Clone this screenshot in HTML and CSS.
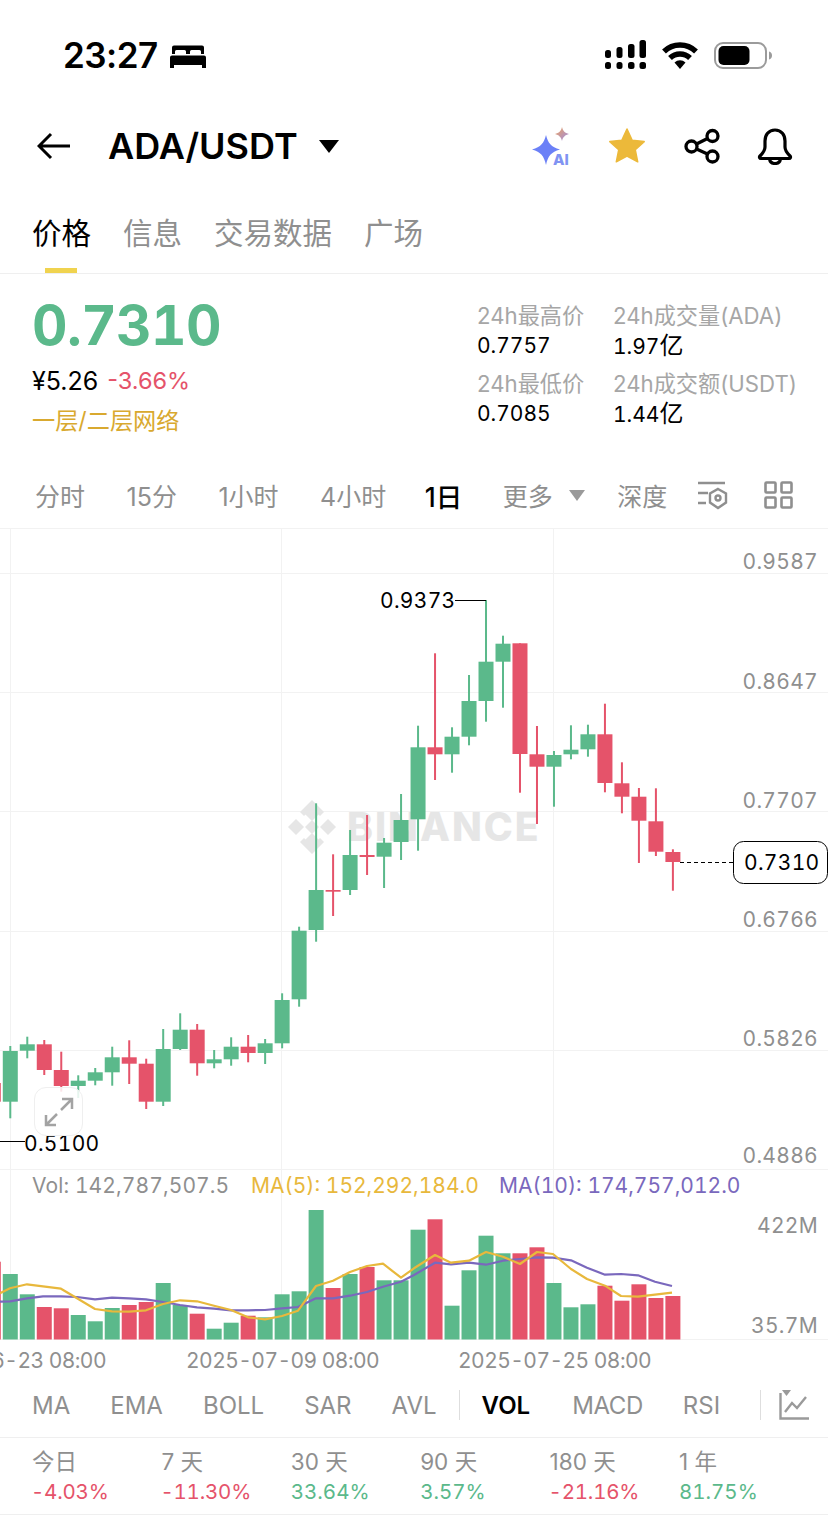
FILE: index.html
```html
<!DOCTYPE html>
<html lang="zh-CN">
<head>
  <meta charset="UTF-8">
  <meta name="viewport" content="width=device-width, initial-scale=1.0">
  <title>ADA/USDT</title>
  <link rel="stylesheet" href="styles.css">
</head>
<body>
  <div class="status-bar">
    <span class="clock">23:27</span>
    <svg class="bed" width="36" height="24" viewBox="0 0 36 24">
      <path d="M4 1.5h28a2 2 0 0 1 2 2V10h-3V7.500a1.500 1.500 0 0 0-1.500-1.500h-8A1.500 1.500 0 0 0 20 7.500V10h-4V7.500A1.500 1.500 0 0 0 14.500 6h-8A1.500 1.500 0 0 0 5 7.500V10H2V3.500a2 2 0 0 1 2-2z"/>
      <path d="M2 11.500h32a2 2 0 0 1 2 2V24h-4v-3H4v3H0V13.500a2 2 0 0 1 2-2z"/>
    </svg>
    <div class="status-icons">
      <svg width="42" height="30" viewBox="0 0 42 30">
        <rect x="0" y="10" width="6" height="8" rx="2.500"/><rect x="11.500" y="7" width="6" height="11" rx="2.500"/>
        <rect x="23" y="4" width="6.500" height="14" rx="2.500"/><rect x="34.500" y="0" width="6.500" height="18" rx="2.500"/>
        <rect x="0" y="22" width="6" height="7" rx="2.500"/><rect x="11.500" y="22" width="6" height="7" rx="2.500"/>
        <rect x="23" y="22" width="6.500" height="7" rx="2.500"/><rect x="34.500" y="22" width="6.500" height="7" rx="2.500"/>
      </svg>
      <svg class="wifi" width="36" height="27" viewBox="0 0 36 27">
        <path d="M2 9.500a23 23 0 0 1 32 0M8 16a14.500 14.500 0 0 1 20 0" fill="none" stroke="#000" stroke-width="5.500"/>
        <path d="M12.500 20.500a8 8 0 0 1 11 0L18 27z"/>
      </svg>
      <svg class="battery" width="58" height="27" viewBox="0 0 58 27">
        <rect x="1" y="1" width="51" height="25" rx="8" fill="none" stroke="#9b9b9b" stroke-width="2"/>
        <rect x="4.500" y="4" width="31" height="19" rx="5"/>
        <path d="M55 9.500c2 .5 3 2 3 4s-1 3.500-3 4z" fill="#9b9b9b"/>
      </svg>
    </div>
  </div>

  <div class="top-bar">
    <svg class="back" width="34" height="28" viewBox="0 0 34 28">
      <path d="M33 14H2M14 2L2 14l12 12" fill="none" stroke="#000" stroke-width="3"/>
    </svg>
    <span class="pair">ADA/USDT</span>
    <svg class="pair-caret" width="20" height="13" viewBox="0 0 20 13"><path d="M0 0h20L10 13z"/></svg>
    <div class="top-actions">
      <svg width="40" height="46" viewBox="0 -4 40 46">
        <defs>
          <linearGradient id="sparkleFill" x1="0" y1="0" x2="1" y2="1">
            <stop offset="0" stop-color="#f0a45c"/>
            <stop offset="1" stop-color="#9a8ce8"/>
          </linearGradient>
        </defs>
        <path d="M14 8c2 8 5 12 14 14.500C19 25 16 29 14 38 12 29 9 25 0 22.500 9 20 12 16 14 8z" fill="#6b80f7"/>
        <path d="M30 0c1 4 3 6 7 7-4 1-6 3-7 7-1-4-3-6-7-7 4-1 6-3 7-7z" fill="url(#sparkleFill)"/>
        <text x="21" y="38" class="ai-mark">AI</text>
      </svg>
      <svg width="36" height="36" viewBox="0 0 36 36">
        <path d="M18 1l5.200 11.200 12 1.400-8.900 8.200 2.400 12L18 28l-10.700 5.800 2.400-12L.8 13.600l12-1.400z" fill="#ecb93a" stroke="#ecb93a" stroke-width="1.500" stroke-linejoin="round"/>
      </svg>
      <svg class="share" width="36" height="36" viewBox="0 0 36 36" fill="none" stroke="#000" stroke-width="3.300">
        <circle cx="7.500" cy="18.500" r="5.500"/><circle cx="28.500" cy="8" r="5.500"/><circle cx="28.500" cy="28.500" r="5.500"/>
        <path d="M12.500 16l11-5.500M12.500 21l11 5"/>
      </svg>
      <svg width="36" height="37" viewBox="0 0 36 37" fill="none" stroke="#000" stroke-width="3.200" stroke-linejoin="round">
        <path d="M18 2c-6.500 0-10 5-10 11v6c0 4-2 6-5 9-1 1-.5 2.500 1 2.500h28c1.500 0 2-1.500 1-2.500-3-3-5-5-5-9v-6c0-6-3.500-11-10-11z"/>
        <path d="M12.500 31c.5 3 2.500 4.500 5.500 4.500s5-1.500 5.500-4.500"/>
      </svg>
    </div>
  </div>

  <div class="tabs">
    <span class="tab active">价格</span>
    <span class="tab">信息</span>
    <span class="tab">交易数据</span>
    <span class="tab">广场</span>
  </div>

  <div class="summary">
    <div class="price-block">
      <div class="last-price">0.7310</div>
      <div class="price-sub"><span class="cny">¥5.26</span><span class="down">-3.66%</span></div>
      <div class="network-tag">一层/二层网络</div>
    </div>
    <div class="stats">
      <div class="stat"><span class="stat-label">24h最高价</span><span class="stat-value">0.7757</span></div>
      <div class="stat"><span class="stat-label">24h成交量(ADA)</span><span class="stat-value">1.97<span class="unit">亿</span></span></div>
      <div class="stat"><span class="stat-label">24h最低价</span><span class="stat-value">0.7085</span></div>
      <div class="stat"><span class="stat-label">24h成交额(USDT)</span><span class="stat-value">1.44<span class="unit">亿</span></span></div>
    </div>
  </div>

  <div class="intervals">
    <span>分时</span>
    <span>15分</span>
    <span>1小时</span>
    <span>4小时</span>
    <span class="current">1日</span>
    <span>更多</span>
    <svg class="more-caret" width="16" height="11" viewBox="0 0 16 11"><path d="M0 0h16L8 11z" fill="#9a9a9a"/></svg>
    <span class="depth">深度</span>
    <svg class="tool-settings" width="31" height="30" viewBox="0 0 31 30" fill="none" stroke="#8f8f8f" stroke-width="2.400">
      <path d="M1 3h27M1 13h10M1 23h8"/>
      <path d="M21 9l8 4.500v9L21 28l-8-5.500v-9z"/>
      <circle cx="21" cy="18" r="2.500"/>
    </svg>
    <svg class="tool-grid" width="29" height="28" viewBox="0 0 29 28" fill="none" stroke="#8f8f8f" stroke-width="2.600">
      <rect x="1.500" y="1.500" width="10" height="10" rx="1"/><rect x="17.500" y="1.500" width="10" height="10" rx="1"/>
      <rect x="1.500" y="16.500" width="10" height="10" rx="1"/><rect x="17.500" y="16.500" width="10" height="10" rx="1"/>
    </svg>
  </div>

  <div class="chart">
    <svg id="chartSvg" width="828" height="846" viewBox="0 529 828 846">
      <g class="grid-lines">
        <path d="M0 573.500H828M0 692.500H828M0 811.500H828M0 931.500H828M0 1050.500H828M0 1169.500H828M0 1339.500H828"/>
        <path d="M10.500 529V1339M281.500 529V1339M553.500 529V1339"/>
      </g>
      <g class="watermark">
        <path d="M312 803l9 9-9 9-9-9zM296 819l8 8-8 8-8-8zM328 819l8 8-8 8-8-8zM312 833l9 9-9 9-9-9zM312 820l7 7-7 7-7-7z"/>
        <path d="M300 812l12-12 12 12-4 4-8-8-8 8zM300 842l12 12 12-12-4-4-8 8-8-8z"/>
        <text x="347" y="841">BINANCE</text>
      </g>
      <g id="candles"></g>
      <g id="volumes"></g>
      <g id="averages"></g>

      <g class="axis-labels">
        <text x="818" y="569">0.9587</text>
        <text x="818" y="689">0.8647</text>
        <text x="818" y="808">0.7707</text>
        <text x="818" y="927">0.6766</text>
        <text x="818" y="1046">0.5826</text>
        <text x="818" y="1163">0.4886</text>
        <text x="818" y="1233">422M</text>
        <text x="818" y="1333">35.7M</text>
      </g>

      <path class="marker-line" d="M455 600.500H486M0 1141.500H25"/>
      <text class="marker" x="380" y="608">0.9373</text>
      <text class="marker" x="24" y="1151">0.5100</text>

      <path class="last-line" d="M680 862.500H733"/>
      <rect class="last-box" x="733.500" y="841.500" width="94" height="42" rx="10"/>
      <text class="marker" x="744" y="870">0.7310</text>

      <text class="legend" x="32" y="1193">Vol: 142,787,507.5</text>
      <text class="legend ma5" x="251" y="1193">MA(5): 152,292,184.0</text>
      <text class="legend ma10" x="499" y="1193">MA(10): 174,757,012.0</text>

      <text class="date" x="106" y="1368" text-anchor="end">06-23 08:00</text>
      <text class="date" x="186" y="1368">2025-07-09 08:00</text>
      <text class="date" x="458" y="1368">2025-07-25 08:00</text>
    </svg>
    <div class="expand">
      <svg width="32" height="32" viewBox="0 0 32 32" fill="none" stroke="#a3a3a3" stroke-width="2.500">
        <path d="M19 3h10v10M29 3L18 14M3 19v10h10M3 29l11-11"/>
      </svg>
    </div>
  </div>

  <div class="indicators">
    <span>MA</span>
    <span>EMA</span>
    <span>BOLL</span>
    <span>SAR</span>
    <span>AVL</span>
    <i class="sep"></i>
    <span class="current">VOL</span>
    <span class="macd">MACD</span>
    <span>RSI</span>
    <i class="sep sep-last"></i>
    <svg class="ind-icon" width="30" height="31" viewBox="0 0 30 31" fill="none" stroke="#9a9a9a" stroke-width="2.400">
      <path d="M1.500 3v25.500H30M6 22l7-9 5 5 9-11"/>
      <path d="M3 0h9L7.500 6z" fill="#9a9a9a" stroke="none"/>
    </svg>
  </div>

  <div class="returns">
    <div class="ret"><span class="ret-label">今日</span><span class="down">-4.03%</span></div>
    <div class="ret"><span class="ret-label">7 天</span><span class="down">-11.30%</span></div>
    <div class="ret"><span class="ret-label">30 天</span><span class="up">33.64%</span></div>
    <div class="ret"><span class="ret-label">90 天</span><span class="up">3.57%</span></div>
    <div class="ret"><span class="ret-label">180 天</span><span class="down">-21.16%</span></div>
    <div class="ret"><span class="ret-label">1 年</span><span class="up">81.75%</span></div>
  </div>

  <script src="chart.js"></script>
</body>
</html>
```

FILE: styles.css
```css
* {
  box-sizing: border-box;
}
body {
  margin: 0;
  width: 828px;
  height: 1523px;
  overflow: hidden;
  background: #fff;
  color: #000;
  font-family: Inter, "Noto Sans CJK SC", sans-serif;
}
svg {
  display: block;
  flex: none;
}

.status-bar {
  display: flex;
  align-items: center;
  height: 100px;
  padding: 10px 56px 0 63px;
}
.clock {
  font-size: 35px;
  font-weight: 600;
  letter-spacing: -0.500px;
}
.bed {
  margin-left: 12px;
  margin-top: 2px;
}
.status-icons {
  display: flex;
  align-items: center;
  gap: 15px;
  margin-left: auto;
}
.status-icons .battery {
  margin-left: 1px;
}

.top-bar {
  display: flex;
  align-items: center;
  height: 92px;
  padding: 0 35px 0 37px;
}
.pair {
  margin-left: 37px;
  font-size: 36px;
  font-weight: 600;
}
.pair-caret {
  margin-left: 21px;
}
.top-actions {
  display: flex;
  align-items: center;
  gap: 37px;
  margin-left: auto;
}
.ai-mark {
  font-size: 15px;
  font-weight: 800;
  fill: #8093f2;
}
.share {
  margin-left: 2px;
}

.tabs {
  display: flex;
  gap: 32px;
  height: 82px;
  padding: 19px 0 0 32px;
  border-bottom: 1px solid #efefef;
}
.tab {
  position: relative;
  font-size: 29.500px;
  line-height: 44px;
  color: #8f8f8f;
}
.tab.active {
  color: #000;
}
.tab.active::after {
  content: "";
  position: absolute;
  left: 13px;
  bottom: 0;
  width: 32px;
  height: 5px;
  background: #f0d34f;
}

.summary {
  display: flex;
  justify-content: space-between;
  height: 194px;
  padding: 0 0 0 32px;
}
.last-price {
  margin-top: 16px;
  font-size: 55px;
  line-height: 70px;
  font-weight: 700;
  color: #5bb98b;
  letter-spacing: -0.600px;
  font-variant-numeric: tabular-nums;
}
.price-sub {
  display: flex;
  gap: 9px;
  margin-top: 6px;
  font-size: 23.500px;
  line-height: 30px;
}
.cny {
  color: #000;
  font-size: 25px;
}
.down {
  color: #e5536a;
}
.up {
  color: #5bb98b;
}
.network-tag {
  margin-top: 10px;
  font-size: 23.200px;
  line-height: 30px;
  color: #d9a92f;
}
.stats {
  display: grid;
  grid-template-columns: 136px 215px;
  grid-auto-rows: 68px;
  margin-top: 27px;
}
.stat {
  display: flex;
  flex-direction: column;
  gap: 1px;
}
.stat-label {
  font-size: 22.200px;
  line-height: 30px;
  color: #a6a6a6;
  white-space: nowrap;
}
.stat-value {
  font-size: 21px;
  line-height: 28px;
  font-variant-numeric: tabular-nums;
}
.unit {
  font-size: 24px;
}

.intervals {
  display: flex;
  align-items: center;
  gap: 41.500px;
  height: 61px;
  padding: 0 0 6px 35px;
  border-bottom: 1px solid #f2f2f2;
  font-size: 25px;
  color: #8f8f8f;
}
.intervals .current {
  margin: 0 -1px 0 -3px;
  color: #000;
  font-size: 26.500px;
  font-weight: 500;
}
.more-caret {
  margin-left: -25px;
}
.depth {
  margin-left: -9.500px;
}
.tool-settings {
  margin-left: -11.500px;
}
.tool-grid {
  margin-left: -5.500px;
}

.chart {
  position: relative;
  height: 846px;
  font-variant-numeric: tabular-nums;
}
.grid-lines path {
  fill: none;
  stroke: #f2f2f2;
  stroke-width: 1;
}
.watermark {
  fill: #e6e6e6;
}
.watermark text {
  font-size: 39px;
  font-weight: 800;
  letter-spacing: 2px;
}
.axis-labels text {
  font-size: 21px;
  fill: #8f8f8f;
  text-anchor: end;
  letter-spacing: 0.300px;
}
.marker {
  font-size: 21px;
  fill: #000;
  letter-spacing: 0.300px;
}
.marker-line {
  fill: none;
  stroke: #000;
  stroke-width: 1;
}
.last-line {
  fill: none;
  stroke: #000;
  stroke-width: 1;
  stroke-dasharray: 4 3;
}
.last-box {
  fill: #fff;
  stroke: #000;
  stroke-width: 1;
}
.legend {
  font-size: 21px;
  fill: #8f8f8f;
  letter-spacing: 0.100px;
}
.legend.ma5 {
  fill: #e8b83c;
  letter-spacing: 0;
}
.legend.ma10 {
  fill: #7a68bd;
  letter-spacing: 0;
}
.date {
  font-size: 21px;
  fill: #8f8f8f;
  letter-spacing: -0.550px;
}
.expand {
  position: absolute;
  left: 34px;
  top: 558px;
  display: flex;
  align-items: center;
  justify-content: center;
  width: 49px;
  height: 49px;
  background: rgba(255, 255, 255, 0.85);
  border: 1px solid #efefef;
  border-radius: 12px;
}

.indicators {
  display: flex;
  align-items: center;
  gap: 40px;
  height: 63px;
  padding: 0 0 2px 32px;
  border-bottom: 1px solid #efefef;
  font-size: 24px;
  color: #8f8f8f;
}
.indicators .current {
  color: #000;
  font-weight: 600;
}
.macd {
  margin-left: 2px;
  letter-spacing: -0.400px;
}
.sep {
  width: 1px;
  height: 30px;
  margin: 0 -18px;
  background: #dedede;
}
.sep-last {
  margin: 0 -22px 0 0;
}

.returns {
  display: grid;
  grid-template-columns: repeat(6, 129.400px);
  height: 77px;
  padding: 9px 0 0 32px;
  border-bottom: 1px solid #efefef;
}
.ret {
  display: flex;
  flex-direction: column;
  font-size: 20.500px;
  line-height: 30px;
  font-variant-numeric: tabular-nums;
}
.ret .down {
  margin-left: -1px;
  letter-spacing: -0.200px;
}
.ret-label {
  color: #8f8f8f;
  font-size: 22.500px;
  font-variant-numeric: normal;
}
```

FILE: chart.js
```js
const NS = 'http://www.w3.org/2000/svg';
const GREEN = '#5bb98b';
const RED = '#e5536a';

// [colour, wick top, body top, body bottom, wick bottom], one per day, 17px apart
const candles = [
  ['r', 1075, 1083, 1101.7, 1110],
  ['g', 1046, 1051, 1101.7, 1118.3],
  ['g', 1036.7, 1044.3, 1050.7, 1058.3],
  ['r', 1040, 1044.3, 1070, 1075],
  ['r', 1051.7, 1070, 1086, 1091.7],
  ['g', 1075.3, 1080.7, 1086, 1098],
  ['g', 1068, 1072.3, 1080.7, 1085.3],
  ['g', 1046.7, 1057.3, 1072.3, 1085.7],
  ['r', 1040.3, 1057.3, 1063.7, 1084],
  ['r', 1058.7, 1063.7, 1101.7, 1109],
  ['g', 1029, 1049, 1101.7, 1106],
  ['g', 1013.3, 1029.7, 1049, 1050],
  ['r', 1024, 1029.7, 1063.3, 1075.7],
  ['g', 1050, 1059.3, 1063.3, 1068.3],
  ['g', 1037.3, 1046.7, 1059.3, 1065.7],
  ['r', 1035, 1046.7, 1053, 1062.3],
  ['g', 1039, 1043.3, 1053, 1064],
  ['g', 993.3, 1000, 1043.3, 1048.3],
  ['g', 926.7, 930.7, 999.3, 1006.7],
  ['g', 803.3, 890, 930, 941.7],
  ['r', 854.3, 890, 891.7, 916],
  ['g', 830, 855, 890, 895],
  ['r', 815, 855, 857, 875],
  ['g', 838, 842.7, 856.7, 888],
  ['g', 794, 820, 842, 860],
  ['g', 725.7, 747.3, 819.3, 850.7],
  ['r', 653.3, 747.3, 754.3, 780],
  ['g', 727.3, 736.7, 754.3, 772.7],
  ['g', 675, 701, 736.7, 745.3],
  ['g', 600, 661.7, 701, 721.7],
  ['g', 635.7, 643.7, 661.7, 707.7],
  ['r', 643.3, 643.3, 754, 792.7],
  ['r', 726, 754.3, 766.7, 824],
  ['g', 751, 755, 766.7, 806.7],
  ['g', 725.3, 749.7, 754.3, 759.3],
  ['g', 724.7, 734.3, 749.3, 756.7],
  ['r', 703.7, 734.3, 783, 792.3],
  ['r', 762.3, 783.3, 796.7, 813.3],
  ['r', 788, 796.7, 820.7, 863],
  ['r', 788.3, 821.3, 851.7, 856],
  ['r', 849.3, 852, 862, 890.7]
];

// top edge of each volume bar, same order as the candles
const volumes = [
  1261.7, 1274, 1294.3, 1307, 1308.3, 1315, 1321.3, 1308, 1305, 1302, 1283,
  1305, 1313.7, 1328.7, 1322.7, 1315.7, 1317.3, 1294.3, 1291.3, 1210, 1288,
  1274, 1267, 1280.3, 1280.3, 1229.7, 1219.3, 1305.7, 1270.3, 1235.7, 1253.3,
  1253.3, 1247.3, 1283, 1307.3, 1304.3, 1285.7, 1300.7, 1284.3, 1298, 1296
];

const ma5 = [
  [0, 1293.3], [10, 1288.3], [27, 1284.3], [43, 1286.3], [61, 1288.7], [77, 1298.3],
  [95, 1309], [112, 1311.3], [129, 1311.7], [146, 1310.3], [163, 1304], [180, 1300.3],
  [197, 1301.3], [214, 1305.7], [231, 1310], [248, 1317.3], [265, 1319.3], [282, 1316],
  [298, 1310.7], [316, 1286], [333, 1280.7], [350, 1272], [367, 1266], [383, 1263.7],
  [401, 1277.7], [414, 1268.3], [435, 1255], [451, 1262.7], [469, 1260.7], [486, 1252],
  [503, 1256.7], [520, 1264], [537, 1252], [553, 1254], [571, 1269], [587, 1279],
  [605, 1285.7], [621, 1296], [638, 1296.7], [655, 1294.7], [672, 1292.7]
];

const ma10 = [
  [0, 1301.7], [10, 1301.3], [27, 1298.3], [43, 1296.3], [61, 1296.3], [77, 1297],
  [95, 1299.3], [112, 1297.7], [129, 1298.3], [146, 1299.3], [163, 1302], [180, 1305],
  [197, 1307.3], [214, 1308.7], [231, 1310.3], [248, 1310.3], [265, 1310], [282, 1308.3],
  [298, 1307], [316, 1298.3], [333, 1298.3], [350, 1295.7], [367, 1292], [383, 1286.7],
  [401, 1281.7], [414, 1275], [435, 1262.7], [451, 1264.3], [469, 1262.7], [486, 1264.7],
  [503, 1260.7], [520, 1259], [537, 1257.3], [553, 1257.7], [571, 1260.3], [587, 1267.7],
  [605, 1274.7], [621, 1274], [638, 1275.3], [655, 1281.7], [672, 1286]
];

const BASE_X = -6.7;
const STEP = 16.99;
const BODY = 15;
const VOL_BASE = 1339.5;

function addRect(parent, x, y, w, h, fill) {
  const rect = document.createElementNS(NS, 'rect');
  rect.setAttribute('x', x);
  rect.setAttribute('y', y);
  rect.setAttribute('width', w);
  rect.setAttribute('height', h);
  rect.setAttribute('fill', fill);
  parent.appendChild(rect);
}

function addLine(parent, points, color) {
  const line = document.createElementNS(NS, 'polyline');
  line.setAttribute('points', points.map(p => p.join(',')).join(' '));
  line.setAttribute('fill', 'none');
  line.setAttribute('stroke', color);
  line.setAttribute('stroke-width', '2.200');
  line.setAttribute('stroke-linejoin', 'round');
  parent.appendChild(line);
}

const candleGroup = document.getElementById('candles');
const volumeGroup = document.getElementById('volumes');
const averageGroup = document.getElementById('averages');

candles.forEach(function (c, i) {
  const x = BASE_X + i * STEP;
  const color = c[0] === 'g' ? GREEN : RED;
  addRect(candleGroup, x - 1, c[1], 2, c[4] - c[1], color);
  addRect(candleGroup, x - BODY / 2, c[2], BODY, c[3] - c[2], color);
  addRect(volumeGroup, x - BODY / 2, volumes[i], BODY, VOL_BASE - volumes[i], color);
});

addLine(averageGroup, ma10, '#7a68bd');
addLine(averageGroup, ma5, '#e8b83c');
```
